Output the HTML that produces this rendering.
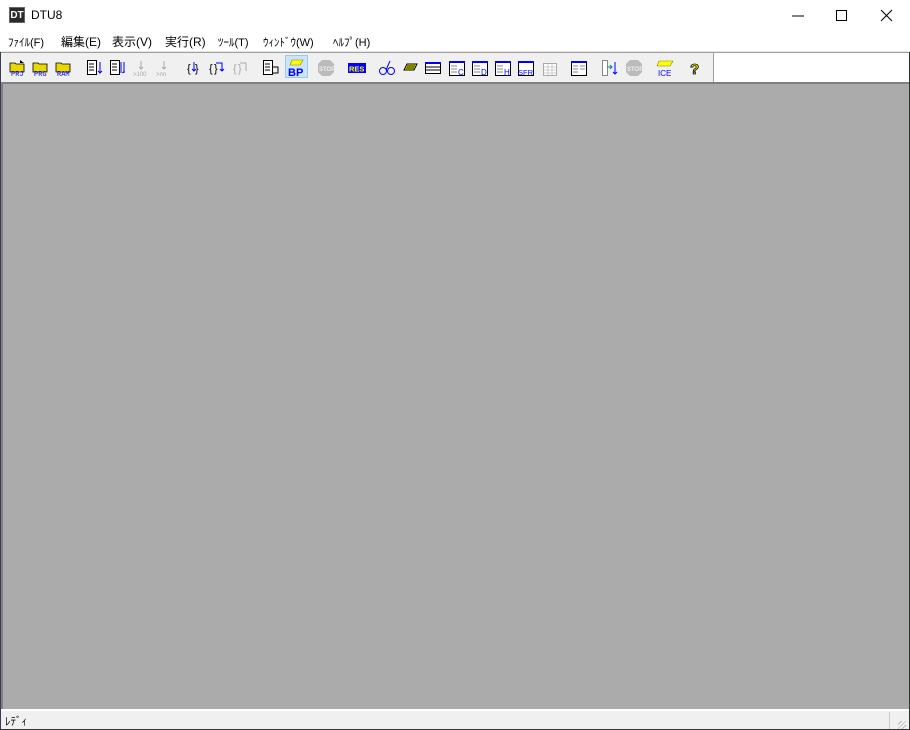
<!DOCTYPE html>
<html><head><meta charset="utf-8"><style>
*{margin:0;padding:0;box-sizing:border-box}
body{width:910px;height:730px;overflow:hidden;background:#fff;position:relative;font-family:"Liberation Sans","Noto Sans CJK JP",sans-serif}
.abs{position:absolute}
#title{left:0;top:0;width:910px;height:30px;background:#fff}
#menu{left:0;top:30px;width:910px;height:21px;background:#fff;font-size:12px;color:#000}
#menu span{position:absolute;top:3px;white-space:nowrap}
#menu span.k{font-size:11px;top:4px}
#tb{left:1px;top:52px;width:713px;height:30px;background:#f0f0f0;border-top:1px solid #a0a0a0;border-right:1px solid #a0a0a0}
#tbw{left:714px;top:52px;width:195px;height:30px;background:#fff;border-top:1px solid #a0a0a0}
#client{left:1px;top:82px;width:908px;height:627px;background:#ababab;border-top:2px solid #808080;border-left:2px solid #808080}
#status{left:1px;top:709px;width:908px;height:20px;background:#f0f0f0;border-top:2px solid #fff}
.ic{position:absolute;top:59px;width:18px;height:18px}
</style></head><body>
<div class="abs" style="left:0;top:0;width:1px;height:730px;background:#3a3a5a"></div>
<div class="abs" style="right:0;top:0;width:1px;height:730px;background:#333"></div>
<div id="title" class="abs">
 <div class="abs" style="left:9px;top:7px;width:16px;height:16px;background:#2a2a2a;color:#fff;font-size:10px;font-weight:bold;line-height:16px;text-align:center;font-family:'Liberation Sans';border:1px solid #666">DT</div>
 <div class="abs" style="left:31px;top:8px;font-size:12px">DTU8</div>
 <svg class="abs" style="left:780px;top:8px" width="120" height="16"><line x1="12" y1="8" x2="24" y2="8" stroke="#000"/><rect x="56.5" y="2.5" width="10" height="10" fill="none" stroke="#000"/><path d="M101 2L112 13M112 2L101 13" stroke="#000"/></svg>
</div>
<div id="menu" class="abs">
 <span class="k" style="left:8px">ﾌｧｲﾙ(F)</span>
 <span style="left:61px">編集(E)</span>
 <span style="left:112px">表示(V)</span>
 <span style="left:165px">実行(R)</span>
 <span class="k" style="left:218px">ﾂｰﾙ(T)</span>
 <span class="k" style="left:263px">ｳｨﾝﾄﾞｳ(W)</span>
 <span class="k" style="left:333px">ﾍﾙﾌﾟ(H)</span>
</div>
<div class="abs" style="left:0;top:51px;width:910px;height:1px;background:#e5e5e5"></div>
<div id="tb" class="abs"></div>
<div id="tbw" class="abs"></div>
<div class="abs" style="left:285px;top:55px;width:23px;height:23px;background:#cce4f7;border:1px solid #99c9ef"></div>
<svg class="ic" style="left:9px" viewBox="0 0 18 18"><path d="M1 4h5l1 1h8v8H1z" fill="#e8d800" stroke="#000" stroke-width=".8"/><path d="M11 1l4 3-4 0z" fill="#000"/><text x="2" y="17" font-size="7" fill="#00f" font-family="Liberation Mono">PRJ</text></svg>
<svg class="ic" style="left:32px" viewBox="0 0 18 18"><path d="M1 4h5l1 1h8v8H1z" fill="#e8d800" stroke="#000" stroke-width=".8"/><text x="2" y="17" font-size="7" fill="#00f" font-family="Liberation Mono">PRG</text></svg>
<svg class="ic" style="left:55px" viewBox="0 0 18 18"><path d="M1 4h5l1 1h8v8H1z" fill="#e8d800" stroke="#000" stroke-width=".8"/><text x="2" y="17" font-size="7" fill="#00f" font-family="Liberation Mono">RAM</text></svg>
<svg class="ic" style="left:86px" viewBox="0 0 18 18"><rect x="1.5" y="1.5" width="9" height="14" fill="#fff" stroke="#000"/><path d="M3 5h5M3 8h5M3 11h5" stroke="#000"/><path d="M14 3v11M12 12l2 2 2-2" stroke="#00f" fill="none"/></svg>
<svg class="ic" style="left:109px" viewBox="0 0 18 18"><rect x="1.5" y="1.5" width="9" height="14" fill="#fff" stroke="#000"/><path d="M3 5h5M3 8h5M3 11h5" stroke="#000"/><path d="M12 3v11M15 3v11M13.5 14l2-2" stroke="#00f" fill="none"/></svg>
<svg class="ic" style="left:132px" viewBox="0 0 18 18"><path d="M9 2v8M7 8l2 2 2-2" stroke="#aaa" fill="none"/><text x="1" y="17" font-size="6" fill="#aaa">&gt;100</text></svg>
<svg class="ic" style="left:155px" viewBox="0 0 18 18"><path d="M9 2v8M7 8l2 2 2-2" stroke="#aaa" fill="none"/><text x="1" y="17" font-size="6" fill="#aaa">&gt;nn</text></svg>
<svg class="ic" style="left:185px" viewBox="0 0 18 18"><text x="2" y="13" font-size="11" fill="#000">{</text><text x="10" y="13" font-size="11" fill="#000">}</text><path d="M9 3v9M7 10l2 2 2-2" stroke="#00f" fill="none"/></svg>
<svg class="ic" style="left:208px" viewBox="0 0 18 18"><text x="1" y="13" font-size="11" fill="#000">{</text><text x="6" y="13" font-size="11" fill="#000">}</text><path d="M8 4h6v8M12 10l2 2 2-2" stroke="#00f" fill="none"/></svg>
<svg class="ic" style="left:232px" viewBox="0 0 18 18"><text x="1" y="13" font-size="11" fill="#aaa">{</text><text x="6" y="13" font-size="11" fill="#aaa">}</text><path d="M8 4h6v8" stroke="#aaa" fill="none"/></svg>
<svg class="ic" style="left:262px" viewBox="0 0 18 18"><rect x="1.5" y="1.5" width="9" height="14" fill="#fff" stroke="#000"/><path d="M3 5h5M3 8h5M3 11h5" stroke="#000"/><path d="M10 8h6v6h-6" stroke="#000" fill="none"/></svg>
<svg class="ic" style="left:287px" viewBox="0 0 18 18"><path d="M5 1h11l-3 5H3z" fill="#ff0" stroke="#880" stroke-width=".6"/><text x="1" y="17" font-size="11" font-weight="bold" fill="#00f">BP</text></svg>
<svg class="ic" style="left:317px" viewBox="0 0 18 18"><polygon points="5,1 13,1 17,5 17,13 13,17 5,17 1,13 1,5" fill="#bbb"/><text x="2" y="12" font-size="6" font-weight="bold" fill="#eee">STOP</text></svg>
<svg class="ic" style="left:348px" viewBox="0 0 18 18"><rect x="0" y="4" width="18" height="10" fill="#00f"/><text x="1" y="12.5" font-size="7.5" font-weight="bold" fill="#ff0">RES</text></svg>
<svg class="ic" style="left:378px" viewBox="0 0 18 18"><circle cx="5" cy="12" r="3.5" fill="none" stroke="#00f"/><circle cx="13" cy="12" r="3.5" fill="none" stroke="#00f"/><path d="M8 11l4-9" stroke="#00f"/></svg>
<svg class="ic" style="left:401px" viewBox="0 0 18 18"><path d="M3 11l3-6h10l-3 6z" fill="#ff0" stroke="#000"/><path d="M6 7h8M5 9h8" stroke="#000"/></svg>
<svg class="ic" style="left:424px" viewBox="0 0 18 18"><rect x="1.5" y="3.5" width="15" height="11" fill="#fff" stroke="#000"/><rect x="1" y="3" width="16" height="2" fill="#00f"/><path d="M2 8h14M2 11h14" stroke="#000"/></svg>
<svg class="ic" style="left:448px" viewBox="0 0 18 18"><rect x="1.5" y="2.5" width="15" height="14" fill="#fff" stroke="#000"/><rect x="1" y="2" width="16" height="2" fill="#00f"/><path d="M3 7h6M3 10h6M3 13h6" stroke="#888"/><text x="10" y="16" font-size="8" fill="#00f">C</text></svg>
<svg class="ic" style="left:471px" viewBox="0 0 18 18"><rect x="1.5" y="2.5" width="15" height="14" fill="#fff" stroke="#000"/><rect x="1" y="2" width="16" height="2" fill="#00f"/><path d="M3 7h6M3 10h6M3 13h6" stroke="#888"/><text x="10" y="16" font-size="8" fill="#00f">D</text></svg>
<svg class="ic" style="left:494px" viewBox="0 0 18 18"><rect x="1.5" y="2.5" width="15" height="14" fill="#fff" stroke="#000"/><rect x="1" y="2" width="16" height="2" fill="#00f"/><path d="M3 7h6M3 10h6M3 13h6" stroke="#888"/><text x="10" y="16" font-size="8" fill="#00f">H</text></svg>
<svg class="ic" style="left:517px" viewBox="0 0 18 18"><rect x="1.5" y="2.5" width="15" height="14" fill="#fff" stroke="#000"/><rect x="1" y="2" width="16" height="2" fill="#00f"/><text x="1" y="16" font-size="7.5" fill="#00f">SFR</text></svg>
<svg class="ic" style="left:540px" viewBox="0 0 18 18"><rect x="3.5" y="4.5" width="13" height="12" fill="#fff" stroke="#aaa"/><path d="M4 8h12M4 11h12M4 14h12M8 5v11M12 5v11" stroke="#ccc"/></svg>
<svg class="ic" style="left:570px" viewBox="0 0 18 18"><rect x="1.5" y="2.5" width="15" height="14" fill="#fff" stroke="#000"/><rect x="1" y="2" width="16" height="2" fill="#00f"/><path d="M3 7h5M3 10h5M3 13h5M10 7h5M10 10h5" stroke="#888"/></svg>
<svg class="ic" style="left:601px" viewBox="0 0 18 18"><rect x="1.5" y="1.5" width="5" height="15" fill="#fff" stroke="#888"/><path d="M6 8h5M9 6l2 2-2 2" stroke="#088" fill="none"/><path d="M14 3v12M12 13l2 2 2-2" stroke="#00f" fill="none"/></svg>
<svg class="ic" style="left:625px" viewBox="0 0 18 18"><polygon points="5,1 13,1 17,5 17,13 13,17 5,17 1,13 1,5" fill="#bbb"/><text x="2" y="12" font-size="6" font-weight="bold" fill="#eee">STOP</text></svg>
<svg class="ic" style="left:656px" viewBox="0 0 18 18"><path d="M3 2h14l-3 5H1z" fill="#ff0" stroke="#880" stroke-width=".6"/><text x="2" y="17" font-size="8" fill="#00f">ICE</text></svg>
<svg class="ic" style="left:686px" viewBox="0 0 18 18"><text x="4" y="15" font-size="15" font-weight="bold" fill="#ff0" stroke="#000" stroke-width=".8">?</text></svg>
<div id="client" class="abs"></div>
<div id="status" class="abs">
 <div class="abs" style="left:4px;top:2px;font-size:11px;color:#000">ﾚﾃﾞｨ</div>
 <div class="abs" style="left:888px;top:1px;width:1px;height:17px;background:#c8c8c8"></div>
 <div class="abs" style="left:897px;top:10px;width:8px;height:8px;background:repeating-linear-gradient(135deg,transparent 0 2px,#bbb 2px 3px)"></div>
</div>
<div class="abs" style="left:0;top:729px;width:910px;height:1px;background:#333"></div>
</body></html>
